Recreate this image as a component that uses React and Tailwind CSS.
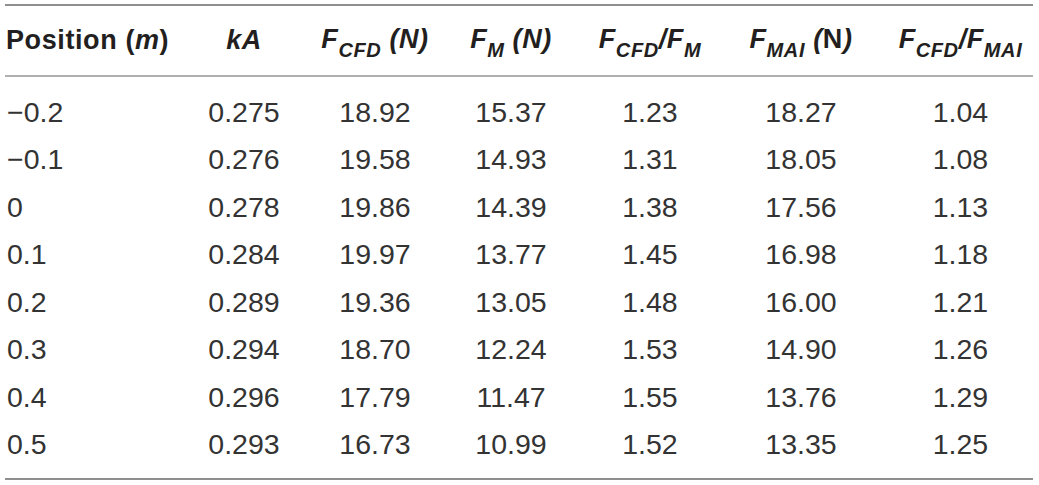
import React from "react";

const rows = [
  ["\u22120.2", "0.275", "18.92", "15.37", "1.23", "18.27", "1.04"],
  ["\u22120.1", "0.276", "19.58", "14.93", "1.31", "18.05", "1.08"],
  ["0", "0.278", "19.86", "14.39", "1.38", "17.56", "1.13"],
  ["0.1", "0.284", "19.97", "13.77", "1.45", "16.98", "1.18"],
  ["0.2", "0.289", "19.36", "13.05", "1.48", "16.00", "1.21"],
  ["0.3", "0.294", "18.70", "12.24", "1.53", "14.90", "1.26"],
  ["0.4", "0.296", "17.79", "11.47", "1.55", "13.76", "1.29"],
  ["0.5", "0.293", "16.73", "10.99", "1.52", "13.35", "1.25"],
];

const cols = "grid grid-cols-[175px_128px_134px_138px_140px_162px_157px]";

function Sub({ children }) {
  return <sub className="text-[20px] leading-none" style={{ verticalAlign: "-0.2em" }}>{children}</sub>;
}

export default function App() {
  return (
    <div className="w-[1039px] h-[485px] bg-white text-[#231f20] pt-[4px] pl-[5px]" style={{ fontFamily: '"Liberation Sans", Arial, sans-serif' }}>
      <div className="w-[1028px]">
        <div className="h-[2px] bg-[#8f8f8f]" />
        <div className={`${cols} h-[69px] items-center text-[27px] font-bold leading-none tracking-[0.6px]`}>
          <div className="justify-self-start pl-[1px]">Position (<i>m</i>)</div>
          <div className="justify-self-center"><i>kA</i></div>
          <div className="justify-self-center"><i>F<Sub>CFD</Sub> (N)</i></div>
          <div className="justify-self-center"><i>F<Sub>M</Sub> (N)</i></div>
          <div className="justify-self-center"><i>F<Sub>CFD</Sub>/F<Sub>M</Sub></i></div>
          <div className="justify-self-center"><i>F<Sub>MAI</Sub> (</i>N<i>)</i></div>
          <div className="justify-self-center"><i>F<Sub>CFD</Sub>/F<Sub>MAI</Sub></i></div>
        </div>
        <div className="h-[2px] bg-[#b0b0b0]" />
        <div className="pt-[11px] pb-[10px] text-[#333333]">
          {rows.map((r, i) => (
            <div key={i} className={`${cols} h-[47.5px] items-center text-[28.5px] leading-none`}>
              {r.map((c, j) => (
                <div key={j} className={j === 0 ? "justify-self-start pl-[2px]" : "justify-self-center"}>{c}</div>
              ))}
            </div>
          ))}
        </div>
        <div className="h-[2px] bg-[#8f8f8f]" />
      </div>
    </div>
  );
}
